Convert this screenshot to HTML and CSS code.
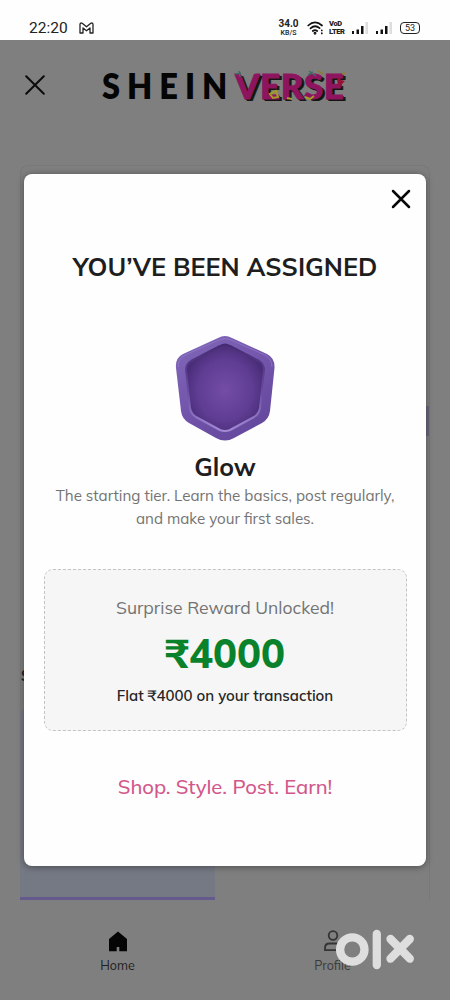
FILE: index.html
```html
<!DOCTYPE html>
<html lang="en">
<head>
<meta charset="utf-8">
<title>SHEINVERSE</title>
<link rel="stylesheet" href="styles.css">
</head>
<body>
<div class="phone">
  <div class="status">
    <span class="time">22:20</span>
    <svg class="mail" width="15" height="12" viewBox="0 0 15 12" fill="none" stroke="#222" stroke-width="1.3" stroke-linejoin="round"><path d="M1 11V2.200Q1.500.4 3.200 1.300L7.500 4.800 11.800 1.300Q13.500.4 14 2.200V11H11V6L7.500 8.800 4 6V11Z"/></svg>
    <div class="speed"><b>34.0</b><span>KB/S</span></div>
    <svg class="wifi" width="18" height="14" viewBox="0 0 18 14" fill="none" stroke="#111" stroke-width="1.700" stroke-linecap="round"><path d="M1.200 4.500Q8 -1.800 15 4.500M3.500 7.400Q8 3.200 12.600 7.200M5.800 10Q8 8.200 10.200 10"/><circle cx="8" cy="12.200" r=".6"/><path d="M14.800 9.300v.2M14.800 12.200v.2"/></svg>
    <div class="volte"><span>VoD</span><span>LTER</span></div>
    <svg class="signal" width="16" height="13" viewBox="0 0 16 13"><path fill="#111" d="M0 10h2v3H0zM4.500 8.500h2.500V13H4.500zM9 5h2.500v8H9z"/><path fill="#ddd" d="M13.500 1H16v12h-2.500z"/></svg>
    <svg class="signal" width="16" height="13" viewBox="0 0 16 13"><path fill="#111" d="M0 10h2v3H0zM4.500 8.500h2.500V13H4.500zM9 5h2.500v8H9z"/><path fill="#ddd" d="M13.500 1H16v12h-2.500z"/></svg>
    <div class="battery">53</div>
  </div>

  <div class="app">
    <header class="header">
      <svg class="back" width="20" height="20" viewBox="0 0 20 20" fill="none" stroke="#0c0c0c" stroke-width="2" stroke-linecap="round"><path d="M1.200 1.200 18.800 18.800M18.800 1.200 1.200 18.800"/></svg>
      <div class="logo"><span class="shein">SHEIN</span><span class="verse">VERSE</span>
        <svg class="sparks" width="118" height="34" viewBox="0 0 118 34" fill="none"><path d="M3 5l6-1M7 2l1 6M77 2l7 5M76 6l5-3" stroke="#3c6f62" stroke-width="1.500"/><path d="M38 25l6-3 2 6-5 1zM73 28l5 2 4-3M55 29l5 1" stroke="#a49b27" stroke-width="2"/><path d="M105 11l2-3 2 3 4 1-3 3v3l-4-2z" fill="#981238"/><path d="M86 2l5 3M110 5l3-1" stroke="#8c7d30" stroke-width="1.500"/></svg>
      </div>
    </header>
    <div class="panel"><i class="marker"></i><i class="letter">S</i><div class="tile"></div></div>
    <nav class="tabs">
      <div class="tab active"><svg width="20" height="22" viewBox="0 0 20 22"><path fill="#050505" d="M10 1.500 19 9V21.200H11.300V17H8.700v4.200H1V9Z"/></svg><span>Home</span></div>
      <div class="tab"><svg width="20" height="22" viewBox="0 0 20 22" fill="none" stroke="#343434" stroke-width="1.800"><circle cx="10" cy="5.500" r="4.300"/><path d="M2 20.200V18Q2 13.500 6.500 13.500H13.500Q18 13.500 18 18V20.200Z"/></svg><span>Profile</span></div>
    </nav>
  </div>

  <section class="modal">
    <svg class="close" width="20" height="20" viewBox="0 0 20 20" fill="none" stroke="#080808" stroke-width="2.500" stroke-linecap="round"><path d="M2 2 18 18M18 2 2 18"/></svg>
    <h1>YOU’VE BEEN ASSIGNED</h1>
    <svg class="badge" width="102" height="106" viewBox="0 0 102 106">
      <defs>
        <linearGradient id="rim" x1="0" y1="0" x2=".6" y2="1"><stop offset="0" stop-color="#8068b8"/><stop offset=".5" stop-color="#7557ae"/><stop offset="1" stop-color="#65499e"/></linearGradient>
        <radialGradient id="face" cx=".5" cy=".53" r=".64"><stop offset="0" stop-color="#744da6"/><stop offset=".55" stop-color="#5f3d93"/><stop offset="1" stop-color="#3c2368"/></radialGradient>
        <linearGradient id="edge" x1="0" y1="0" x2="0" y2="1"><stop offset="0" stop-color="#452b71"/><stop offset=".55" stop-color="#6a4da3"/><stop offset="1" stop-color="#a48ad4"/></linearGradient>
      </defs>
      <path fill="url(#rim)" d="M44 3Q51-1 58 3L93 19Q101 23 100.500 33L96 76Q95 84 88 88L60 103Q51 108 42 103L15 88Q8 84 7 76L2 33Q1 23 9 19Z"/>
      <path fill="none" stroke="#9780cc" stroke-width="1" opacity=".6" d="M45 5Q51 2 57 5L91 20Q98 24 98 32M4 32Q4 24 11 20L45 5"/>
      <path fill="url(#face)" stroke="url(#edge)" stroke-width="2" stroke-linejoin="round" d="M46 11Q51 8 56 11L85 26Q90 29 90 35L86 73Q85 79 80 82L56 95Q51 97 46 95L22 82Q17 79 16 73L12 35Q12 29 17 26Z"/>
    </svg>
    <h2>Glow</h2>
    <p class="desc">The starting tier. Learn the basics, post regularly,<br>and make your first sales.</p>
    <div class="reward">
      <div class="unlocked">Surprise Reward Unlocked!</div>
      <div class="amount">₹4000</div>
      <div class="flat">Flat ₹4000 on your transaction</div>
    </div>
    <div class="tagline">Shop. Style. Post. Earn!</div>
  </section>

  <svg class="olx" width="80" height="42" viewBox="0 0 80 42" fill="none" stroke="#dedede" stroke-width="8.300" stroke-linecap="round" role="img" aria-label="olx"><circle cx="17.300" cy="21.500" r="12.200"/><path d="M41.800 6V37M55.500 11 74.800 30.700M74.800 11 55.500 30.700"/></svg>
</div>
</body>
</html>
```
FILE: styles.css
```css
* { box-sizing: border-box; }
body { margin: 0; background: #7f7f7f; font-family: Mulish, Lato, "Noto Sans", sans-serif; }
.phone { position: relative; width: 450px; height: 1000px; overflow: hidden; display: flex; flex-direction: column; }
.status { height: 40px; background: #fefefe; display: flex; align-items: center; padding: 15px 28px 0 29px; color: #222; flex: none; }
.time { font: 15.500px/18px Roboto, sans-serif; width: 50px; }
.mail { margin-right: 184px; }
.speed { width: 21px; display: flex; flex-direction: column; align-items: center; font: 9.500px/10px Roboto, sans-serif; margin-right: 8px; }
.speed b { font-size: 10px; }
.speed span { font-size: 7px; line-height: 8px; font-weight: 500; }
.volte { font: 900 7.500px/8px Roboto, sans-serif; width: 16px; margin: 0 7px 0 4px; letter-spacing: -.4px; display: flex; flex-direction: column; }
.volte span { white-space: nowrap; }
.signal { flex: none; margin-right: 8px; }
.battery { width: 20px; height: 12px; border: 1.500px solid #222; border-radius: 4px; font: 9px/10px Roboto, sans-serif; text-align: center; flex: none; }
.app { flex: 1; background: #7f7f7f; display: flex; flex-direction: column; }
.header { height: 125px; padding: 35px 0 0 25px; display: flex; align-items: flex-start; flex: none; }
.back { margin-right: 57px; }
.logo { position: relative; display: flex; height: 40px; margin-top: -10px; font: 900 35px/40px Lato, sans-serif; color: #050505; }
.shein { width: 133px; letter-spacing: 7.500px; font-weight: 800; transform: scaleX(.93); transform-origin: left; }
.verse { color: #8e1460; letter-spacing: .5px; text-shadow: 1px 1px #121512, 2px 2px #121512, 3px 2px #1d2519; -webkit-text-stroke: .8px #8e1460; }
.sparks { position: absolute; left: 130px; top: 4px; }
.panel { position: relative; height: 735px; margin: 0 20px; border: 1px solid #787878; border-bottom: 0; border-radius: 8px 8px 0 0; display: flex; align-items: flex-end; flex: none; }
.tile { width: 195px; height: 190px; margin-left: -1px; background: #757983; border-bottom: 3px solid #655a8e; }
.marker { position: absolute; right: 0; top: 240px; width: 4px; height: 30px; background: #686879; }
.letter { position: absolute; left: 0; top: 499px; font: 700 15px/20px Lato, sans-serif; color: #222; }
.tabs { display: flex; padding: 30px 10px 0; }
.tab { width: 215px; display: flex; flex-direction: column; align-items: center; color: #3b3b3b; font-size: 12.500px; line-height: 17px; }
.tab svg { margin-bottom: 5px; }
.tab.active { color: #202020; }
.modal { position: absolute; left: 24px; top: 174px; width: 402px; height: 692px; background: #fefefe; border-radius: 8px; box-shadow: 0 1px 7px rgba(0,0,0,.4); display: flex; flex-direction: column; align-items: center; padding: 15px 19px; text-align: center; color: #1e1e1e; white-space: nowrap; }
.close { align-self: flex-end; margin-right: -4px; flex: none; }
h1 { margin: 43px 0 0; font-size: 25.300px; line-height: 30px; font-weight: 700; }
.badge { margin-top: 53px; flex: none; }
h2 { margin: 9px 0 0; font-size: 25px; line-height: 34px; font-weight: 700; }
.desc { margin: 1px 0 0; font-size: 15.150px; line-height: 22.500px; color: #737373; }
.reward { width: 363px; height: 162px; margin-top: 39px; border: 1.500px dashed #c4c4c4; border-radius: 9px; background: #f6f6f6; display: flex; flex-direction: column; align-items: center; padding-top: 25px; flex: none; }
.unlocked { font-size: 17.500px; line-height: 24px; color: #737373; }
.amount { margin-top: 9px; font-size: 40px; line-height: 50px; font-weight: 800; color: #09822b; }
.flat { margin-top: 8px; font-size: 15px; line-height: 20px; font-weight: 600; color: #252525; }
.tagline { margin-top: 42px; font-size: 20.200px; line-height: 28px; font-weight: 500; color: #d2588b; }
.olx { position: absolute; left: 335px; top: 928px; }
```
